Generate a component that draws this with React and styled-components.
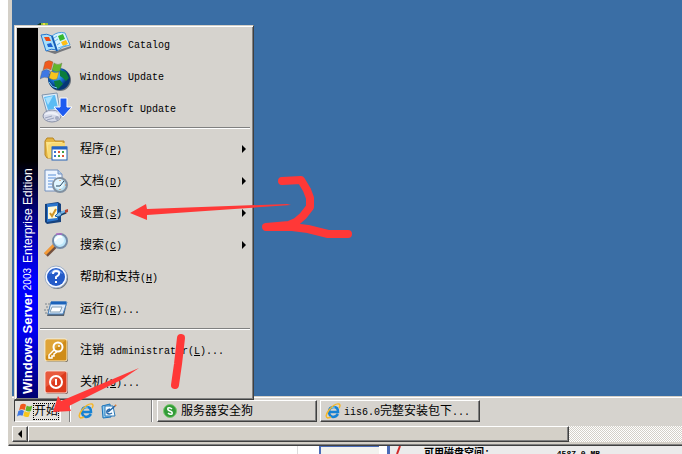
import React from 'react'
import styled, { createGlobalStyle } from 'styled-components'

const GlobalStyle = createGlobalStyle`
  * {
    box-sizing: border-box;
  }
  body {
    margin: 0;
    background: #ffffff;
    overflow: hidden;
    font-family: 'Liberation Mono', 'Noto Sans CJK SC', monospace;
    font-size: 12px;
    color: #000000;
  }
  button {
    font: inherit;
    color: inherit;
    margin: 0;
    border-radius: 0;
  }
`

const Page = styled.div`
  height: 100vh;
  position: relative;
  overflow: hidden;
  display: flex;
  flex-direction: column;
`
const Viewer = styled.main`
  flex: 1;
  min-height: 0;
  margin-left: 8px;
  border-left: 1px solid #d4d0c8;
  border-bottom: 1px solid #404040;
  box-shadow: inset 0 -1px 0 #808080;
  background: #d4d0c8;
  padding: 0 0 3px 3px;
  display: flex;
  flex-direction: column;
`
const Desktop = styled.div`
  flex: 1;
  position: relative;
  min-height: 0;
  background: #3a6ea5;
`
const DesktopIcon = styled.svg`
  position: absolute;
  left: 25px;
  top: 23px;
`
const StartMenu = styled.nav`
  position: absolute;
  left: 2px;
  bottom: -4px;
  width: 240px;
  display: flex;
  padding: 2px 3px 1px 1px;
  background: #d6d3ce;
  border: 1px solid #d4d0c8;
  border-right-color: #404040;
  border-bottom-color: #404040;
  box-shadow: inset 1px 1px 0 #ffffff, inset -1px -1px 0 #808080;
`
const Banner = styled.div`
  width: 21px;
  margin-left: 1px;
  flex-shrink: 0;
  padding: 4px 0;
  background: linear-gradient(
    to top,
    #000000 0%,
    #000000 36%,
    #0000a0 54%,
    #0000ff 68%,
    #0000f0 82%,
    #000070 100%
  );
  color: #ffffff;
  font-family: 'Liberation Sans', Arial, sans-serif;
  font-size: 12px;
  line-height: 21px;
  white-space: nowrap;
  writing-mode: vertical-rl;
  transform: rotate(180deg);
`
const Product = styled.strong`
  font-size: 13px;
`
const Year = styled.span`
  font-size: 10px;
`
const Edition = styled.span`
  margin-top: 2px;
`
const MenuItems = styled.ul`
  flex: 1;
  list-style: none;
  margin: 0;
  padding: 0 0 0 2px;
`
const Separator = styled.li`
  height: 2px;
  margin: 3px 0 4px;
  border-top: 1px solid #808080;
  border-bottom: 1px solid #ffffff;
`
const MenuButton = styled.button`
  width: 100%;
  height: 32px;
  display: flex;
  align-items: center;
  padding: 0 4px 0 0;
  border: 0;
  background: none;
  text-align: left;
`
const IconBox = styled.span`
  width: 32px;
  height: 32px;
  margin-right: 8px;
  display: flex;
  align-items: center;
  justify-content: center;
`
const Label = styled.span`
  flex: 1;
  padding-top: 2px;
  line-height: 16px;
  white-space: pre;
`
const Latin = styled.span`
  font-size: 10px;
`
const Submenu = styled.svg`
  flex-shrink: 0;
`
const Taskbar = styled.footer`
  height: 30px;
  flex-shrink: 0;
  display: flex;
  align-items: flex-start;
  padding: 3px 2px 0;
  background: #d6d3ce;
  border-top: 1px solid #d4d0c8;
  box-shadow: inset 0 1px 0 #ffffff;
`
const StartButton = styled.button`
  width: 47px;
  height: 22px;
  flex-shrink: 0;
  display: flex;
  align-items: center;
  padding: 0 0 0 2px;
  background: #e3e1dd;
  border: 1px solid;
  border-color: #404040 #ffffff #ffffff #404040;

  svg {
    flex-shrink: 0;
  }
`
const StartText = styled.span`
  height: 17px;
  line-height: 17px;
  white-space: nowrap;
  border: 1px dotted #000000;
`
const Divider = styled.span`
  width: 2px;
  height: 22px;
  flex-shrink: 0;
  border-left: 1px solid #808080;
  border-right: 1px solid #ffffff;
`
const QuickLaunch = styled.div`
  width: 90px;
  flex-shrink: 0;
  display: flex;
  align-items: center;
  gap: 7px;
  padding-left: 8px;
`
const QuickButton = styled.button`
  width: 16px;
  height: 16px;
  padding: 0;
  border: 0;
  background: none;

  svg {
    display: block;
  }
`
const Tasks = styled.div`
  display: flex;
  gap: 3px;
  margin-left: 4px;
`
const TaskButton = styled.button`
  width: 160px;
  height: 22px;
  display: flex;
  align-items: center;
  gap: 3px;
  padding: 0 4px;
  background: #d6d3ce;
  border: 1px solid;
  border-color: #ffffff #404040 #404040 #ffffff;
  box-shadow: inset -1px -1px 0 #808080;
  text-align: left;
`
const Scrollbar = styled.div`
  height: 16px;
  flex-shrink: 0;
  display: flex;
  background: repeating-conic-gradient(#ffffff 0% 25%, #d4d0c8 0% 50%) 0 0 / 2px 2px;
`
const ScrollPart = styled.button`
  height: 16px;
  display: flex;
  align-items: center;
  justify-content: center;
  padding: 0;
  background: #d4d0c8;
  border: 1px solid;
  border-color: #ffffff #404040 #404040 #ffffff;
  box-shadow: inset -1px -1px 0 #808080;
`
const ScrollArrow = styled(ScrollPart)`
  width: 16px;
`
const ScrollThumb = styled(ScrollPart)`
  flex: 19;
`
const ScrollTrack = styled.div`
  flex: 4;
`
const Behind = styled.div`
  height: 8px;
  flex-shrink: 0;
  display: flex;
  overflow: hidden;
`
const BlankPane = styled.div`
  width: 298px;
  flex-shrink: 0;
  border-right: 1px solid #dcdcdc;
`
const Panel = styled.div`
  width: 60px;
  flex-shrink: 0;
  margin: 0 8px 0 21px;
  border-left: 2px solid #4a6cb8;
  border-top: 1px solid #4a6cb8;
  background: #f2f2ee;
`
const DiskInfo = styled.div`
  flex: 1;
  display: flex;
  background: #ebebeb;
  border-left: 3px solid #4a6cb8;
`
const DiskList = styled.dl`
  display: grid;
  grid-template-columns: 132px 44px;
  margin: -10px 0 0;
  font-size: 10px;
  font-weight: 700;
  line-height: 12px;

  dt,
  dd {
    margin: 0;
    white-space: nowrap;
  }
  dd {
    font-size: 8px;
    text-align: right;
  }
`
const Annotations = styled.svg`
  position: absolute;
  left: 0;
  top: 0;
  pointer-events: none;
`

const CatalogIcon = () => (
  <svg width="32" height="32" viewBox="0 0 32 32">
    <path d="M6 23 L15 26 L20 24 L31 20 V18 L16 23 Z" fill="#75777c" />
    <path d="M1 7 Q7 5 12 8 L17 22 Q11 20 6 23 Z" fill="#a6defa" stroke="#2878cf" />
    <path d="M12 8 Q18 3 25 5 L30 17 Q22 18 17 23 Z" fill="#d6f3ff" stroke="#4f9fdf" />
    <path d="M12 8 L17 23" stroke="#1660b8" strokeWidth="2" />
    <path d="M4 9 L9 9 L11 13 L6 13 Z" fill="#f04b14" />
    <path d="M7 16 L11 15 L13 19 L8 19 Z" fill="#1b62d0" />
    <path d="M18 8 L23 6 L25 11 L20 13 Z" fill="#36b82e" />
    <path d="M21 14 L26 12 L28 16 L23 18 Z" fill="#ffbe13" />
    <path d="M14 10 L17 8 M15 13 L18 11 M17 17 L20 15 M18 20 L27 17" stroke="#68b8e9" />
  </svg>
)

const FlagShape = () => (
  <>
    <path d="M5 2 Q9 -1 13 2 L11 10 Q7 7 3 10 Z" fill="#f05a1d" />
    <path d="M14 3 Q18 6 22 3 L20 11 Q16 13 12 10 Z" fill="#62b72b" />
    <path d="M2 11 Q7 8 10 11 L8 18 Q4 16 0 19 Z" fill="#3d78e4" />
    <path d="M11 11 Q15 14 19 12 L17 19 Q13 21 9 18 Z" fill="#f7c51c" />
  </>
)

const UpdateIcon = () => (
  <svg width="32" height="32" viewBox="0 0 32 32">
    <defs>
      <radialGradient id="globe" cx="40%" cy="35%">
        <stop offset="0" stopColor="#65c8ff" />
        <stop offset="0.6" stopColor="#156ed2" />
        <stop offset="1" stopColor="#053675" />
      </radialGradient>
    </defs>
    <circle cx="20" cy="20" r="11" fill="#69717a" />
    <circle cx="19" cy="19" r="11" fill="url(#globe)" />
    <path d="M20 10 L26 12 L29 18 L26 21 L23 18 L20 16 Z M14 21 L20 20 L23 24 L18 29 L15 26 Z" fill="#0b7d3d" />
    <path d="M9 22 Q12 28 17 28" stroke="#7dd2ff" fill="none" />
    <g stroke="#5c5a3c" strokeOpacity="0.3">
      <FlagShape />
    </g>
  </svg>
)

const MicrosoftUpdateIcon = () => (
  <svg width="32" height="32" viewBox="0 0 32 32">
    <path d="M2 3 L17 1 L20 18 L7 21 Z" fill="#dcecf9" stroke="#8094ac" />
    <path d="M4 5 L15 3 L18 16 L8 18 Z" fill="#5bbcf4" />
    <path d="M5 6 L13 4 L8 13 Z" fill="#a8e1ff" />
    <ellipse cx="12" cy="24" rx="9" ry="6" fill="#d5d9e8" stroke="#8991a7" />
    <path d="M4 23 Q7 19 14 20 Q19 21 19 25 Q14 21 4 23" fill="#eef0f8" />
    <path d="M5 26 L12 24 M7 28 L14 26" stroke="#9ba4bd" />
    <circle cx="17" cy="26" r="2" fill="#a3abc2" />
    <path d="M20 6 H27 V15 H32 L23 25 L14 15 H20 Z" fill="#1e5bf0" stroke="#ffffff" />
  </svg>
)

const ProgramsIcon = () => (
  <svg width="24" height="24" viewBox="0 0 24 24">
    <path d="M1 4 L3 1 H9 L11 4 H20 V21 H3 L1 18 Z" fill="#e3b441" stroke="#b98625" />
    <path d="M2 5 H18 L20 8 V18 L4 21 Z" fill="#fbe48b" />
    <path d="M4 8 L8 6 H21 V18 L4 21 Z" fill="#f8d972" />
    <rect x="8" y="10" width="15" height="13" fill="#ffffff" stroke="#2563b5" />
    <path d="M8 11 H23" stroke="#2465c6" strokeWidth="3" />
    <path d="M10 15 h2 M10 19 h2" stroke="#3971ce" strokeWidth="2" />
    <path d="M14 15 h2 M18 19 h2" stroke="#e05335" strokeWidth="2" />
    <path d="M18 15 h2 M14 19 h2" stroke="#3f9e46" strokeWidth="2" />
  </svg>
)

const DocumentsIcon = () => (
  <svg width="24" height="24" viewBox="0 0 24 24">
    <path d="M1 1 H14 L18 5 V22 H1 Z" fill="#edf5ff" stroke="#7390bd" />
    <path d="M14 1 V5 H18" fill="#b5cfec" stroke="#7390bd" />
    <path d="M4 6 H12 M4 9 H12 M4 12 H9 M4 15 H8 M4 18 H9" stroke="#5b91d8" />
    <circle cx="16" cy="16" r="7" fill="#b8dcec" stroke="#8190a0" strokeWidth="2" />
    <circle cx="15" cy="15" r="5" fill="#e1f6ff" />
    <path d="M16 17 L20 12 M16 17 H12" stroke="#24445e" />
    <path d="M16 11 v1 M21 16 h1 M16 20 v1" stroke="#e16e28" />
  </svg>
)

const SettingsIcon = () => (
  <svg width="24" height="24" viewBox="0 0 24 24">
    <path d="M1 3 L14 1 L17 3 V21 L3 23 L1 21 Z" fill="#16427e" />
    <path d="M3 3 L14 2 V19 L3 21 Z" fill="#2b76ce" />
    <path d="M4 6 L13 5 V17 L4 18 Z" fill="#fff9d8" />
    <path d="M6 12 L8 15 L12 8" fill="none" stroke="#cf9527" strokeWidth="2" />
    <path d="M11 15 L15 11 L18 11 L18 14 L14 16 Z" fill="#81bdec" stroke="#195da2" />
    <path d="M17 13 L22 11" stroke="#173b63" strokeWidth="3" />
    <path d="M17 12 L21 10" stroke="#78b6e6" strokeWidth="2" />
    <path d="M21 9 L24 8 V11 L21 12" fill="#ba402b" />
  </svg>
)

const SearchIcon = () => (
  <svg width="24" height="24" viewBox="0 0 24 24">
    <path d="M2 22 L11 13" stroke="#73503e" strokeWidth="5" />
    <path d="M1 21 L10 12" stroke="#f59a36" strokeWidth="3" />
    <circle cx="16" cy="8" r="7" fill="#bde6fa" stroke="#748ba7" strokeWidth="2" />
    <circle cx="15" cy="7" r="5" fill="#e1f5ff" />
    <path d="M11 8 Q13 3 18 4" stroke="#ffffff" strokeWidth="2" fill="none" />
    <path d="M12 1 H18" stroke="#c454d3" />
  </svg>
)

const HelpIcon = () => (
  <svg width="24" height="24" viewBox="0 0 24 24">
    <circle cx="13" cy="13" r="11" fill="#6a7480" />
    <circle cx="12" cy="12" r="11" fill="#f5f8ff" stroke="#9daec6" />
    <circle cx="12" cy="12" r="9" fill="#245bc9" />
    <path d="M5 9 Q12 -1 19 9 Q12 6 5 9" fill="#6191e6" />
    <path d="M9 9 Q9 6 12 6 Q16 6 15 9 Q15 10 12 12 V14" fill="none" stroke="#ffffff" strokeWidth="2" />
    <rect x="11" y="16" width="2" height="2" fill="#ffffff" />
  </svg>
)

const RunIcon = () => (
  <svg width="24" height="24" viewBox="0 0 24 24">
    <path d="M1 7 H6 M2 10 H5 M0 13 H5 M1 16 H4" stroke="#7b858e" strokeDasharray="2 1" />
    <path d="M7 5 H23 L20 19 H3 Z" fill="#57616e" />
    <path d="M7 5 H23 L19 17 H4 Z" fill="#dbeafb" stroke="#4b84bf" />
    <path d="M7 6 H22" stroke="#1b62ba" strokeWidth="3" />
    <path d="M8 10 H18 L16 15 H6 Z" fill="#ffffff" stroke="#829eb5" />
  </svg>
)

const LogoffIcon = () => (
  <svg width="24" height="24" viewBox="0 0 24 24">
    <rect x="2" y="2" width="22" height="22" rx="2" fill="#756c5c" />
    <rect x="1" y="1" width="22" height="22" rx="2" fill="#cf8c18" stroke="#fff0ca" />
    <path d="M2 2 H22 L2 18 Z" fill="#dfa437" />
    <circle cx="14" cy="9" r="4.5" fill="none" stroke="#ffffff" strokeWidth="2" />
    <circle cx="15" cy="8" r="1" fill="#ffffff" />
    <path d="M10 12 L5 17 V20 H8 V18 H10 V16 L13 14" fill="none" stroke="#ffffff" strokeWidth="1.5" />
  </svg>
)

const ShutdownIcon = () => (
  <svg width="24" height="24" viewBox="0 0 24 24">
    <rect x="2" y="2" width="22" height="22" rx="2" fill="#775e5b" />
    <rect x="1" y="1" width="22" height="22" rx="2" fill="#dc3b1d" stroke="#ffe2d9" />
    <path d="M2 2 H22 L2 17 Z" fill="#e8593c" />
    <circle cx="12" cy="12" r="6" fill="none" stroke="#ffffff" strokeWidth="2" />
    <path d="M12 9 V15" stroke="#ffffff" strokeWidth="2" />
  </svg>
)

const WindowsFlag = () => (
  <svg width="16" height="16" viewBox="0 0 23 22">
    <FlagShape />
  </svg>
)

const BrowserIcon = () => (
  <svg width="16" height="16" viewBox="0 0 16 16">
    <path
      d="M13 11 Q11 14 8 14 Q4 13 4 9 Q4 4 9 4 Q13 4 13 9 H5"
      fill="none"
      stroke="#1682d4"
      strokeWidth="2.5"
    />
    <path d="M4 7 Q6 4 10 4" fill="none" stroke="#65c9fc" />
    <path
      d="M3 15 Q-1 14 4 7 Q10 0 14 1 Q16 2 14 5 M2 15 Q4 15 6 14"
      fill="none"
      stroke="#f3b72c"
      strokeWidth="1.5"
    />
  </svg>
)

const ShowDesktopIcon = () => (
  <svg width="16" height="16" viewBox="0 0 16 16">
    <path d="M1 3 L9 1 L10 14 L2 15 Z" fill="#8fcbef" stroke="#1771ba" />
    <path d="M4 3 H12 L14 13 H4 Z" fill="#f5fbff" stroke="#2c79b7" />
    <path d="M9 6 Q5 7 6 10 Q8 12 11 10 M7 9 L14 3" fill="none" stroke="#2566a8" strokeWidth="1.5" />
    <path d="M14 2 L15 3" stroke="#d97d35" strokeWidth="2" />
  </svg>
)

const GuardIcon = () => (
  <svg width="16" height="16" viewBox="0 0 16 16">
    <circle cx="8" cy="8" r="6.5" fill="#329b37" stroke="#7cc86e" />
    <path d="M10 6 Q8 4 6 5 Q5 7 8 8 Q11 9 10 11 Q8 12 6 10" fill="none" stroke="#ffffff" strokeWidth="1.5" />
  </svg>
)

const menu = [
  { latin: 'Windows Catalog', icon: CatalogIcon },
  { latin: 'Windows Update', icon: UpdateIcon },
  { latin: 'Microsoft Update', icon: MicrosoftUpdateIcon },
  { separator: true },
  { text: '程序', hotkey: 'P', icon: ProgramsIcon, submenu: true },
  { text: '文档', hotkey: 'D', icon: DocumentsIcon, submenu: true },
  { text: '设置', hotkey: 'S', icon: SettingsIcon, submenu: true },
  { text: '搜索', hotkey: 'C', icon: SearchIcon, submenu: true },
  { text: '帮助和支持', hotkey: 'H', icon: HelpIcon },
  { text: '运行', hotkey: 'R', icon: RunIcon, more: true },
  { separator: true },
  { text: '注销', latin: ' administrator', hotkey: 'L', icon: LogoffIcon, more: true },
  { text: '关机', hotkey: 'U', icon: ShutdownIcon, more: true },
]

const MenuItem = ({ item }) => {
  const Icon = item.icon
  return (
    <li>
      <MenuButton type="button" aria-haspopup={item.submenu ? 'menu' : undefined}>
        <IconBox>
          <Icon />
        </IconBox>
        <Label>
          {item.text}
          <Latin>
            {item.latin}
            {item.hotkey && (
              <>
                (<u>{item.hotkey}</u>)
              </>
            )}
            {item.more && '...'}
          </Latin>
        </Label>
        {item.submenu && (
          <Submenu width="4" height="8" viewBox="0 0 4 8">
            <path d="M0 0 L4 4 L0 8 Z" />
          </Submenu>
        )}
      </MenuButton>
    </li>
  )
}

const App = () => {
  return (
    <Page>
      <GlobalStyle />
      <Viewer>
        <Desktop>
          <DesktopIcon width="14" height="4" viewBox="0 0 14 4">
            <path d="M0 2 L3 0 H6 V4 H0 Z" fill="#183b23" />
            <path d="M4 0 H11 V4 H4 Z" fill="#8fc43b" />
            <path d="M6 0 H8 V3 H6 Z" fill="#efd83c" />
          </DesktopIcon>
          <StartMenu>
            <Banner>
              <Product>Windows Server</Product>
              <Year> 2003 </Year>
              <Edition>Enterprise Edition</Edition>
            </Banner>
            <MenuItems>
              {menu.map((item, i) =>
                item.separator ? <Separator key={i} /> : <MenuItem key={i} item={item} />
              )}
            </MenuItems>
          </StartMenu>
        </Desktop>
        <Taskbar>
          <StartButton type="button">
            <WindowsFlag />
            <StartText>开始</StartText>
          </StartButton>
          <QuickLaunch>
            <Divider />
            <QuickButton type="button" aria-label="Internet Explorer">
              <BrowserIcon />
            </QuickButton>
            <QuickButton type="button" aria-label="显示桌面">
              <ShowDesktopIcon />
            </QuickButton>
          </QuickLaunch>
          <Divider />
          <Tasks>
            <TaskButton type="button">
              <GuardIcon />
              <Label>服务器安全狗</Label>
            </TaskButton>
            <TaskButton type="button">
              <BrowserIcon />
              <Label>
                <Latin>iis6.0</Latin>完整安装包下<Latin>...</Latin>
              </Label>
            </TaskButton>
          </Tasks>
        </Taskbar>
        <Scrollbar>
          <ScrollArrow type="button" aria-label="向左滚动">
            <svg width="4" height="8" viewBox="0 0 4 8">
              <path d="M4 0 L0 4 L4 8 Z" />
            </svg>
          </ScrollArrow>
          <ScrollThumb type="button" aria-label="水平滚动" />
          <ScrollTrack />
        </Scrollbar>
      </Viewer>
      <Behind>
        <BlankPane />
        <Panel />
        <DiskInfo>
          <svg width="34" height="8" viewBox="0 0 34 8">
            <path d="M10 0 L7 8" stroke="#d22a2a" strokeWidth="2" />
          </svg>
          <DiskList>
            <dt>磁盘总空间:</dt>
            <dd>8070 MB</dd>
            <dt>可用磁盘空间:</dt>
            <dd>4587.0 MB</dd>
          </DiskList>
        </DiskInfo>
      </Behind>
      <Annotations width="682" height="454" viewBox="0 0 682 454" aria-hidden="true">
        <path d="M130 213 L146 204 L147 209 L287 204 L291 205 L147 215 L147 220 Z" fill="#ff3837" />
        <path d="M139 368 L61 401 L58 396 L53 412 L71 411 L69 406 L121 380 Z" fill="#ff3837" />
        <g fill="none" stroke="#ff3837" strokeWidth="8" strokeLinecap="round" strokeLinejoin="round">
          <path d="M282 181 L301 180 L307 190 L310 198 L310 207 L303 216 L296 222 L289 225 L266 227 L292 227 L308 229 L320 232 L328 234 L348 234" />
          <path d="M181 338 L178 364 L175 385" />
        </g>
      </Annotations>
    </Page>
  )
}

export default App
